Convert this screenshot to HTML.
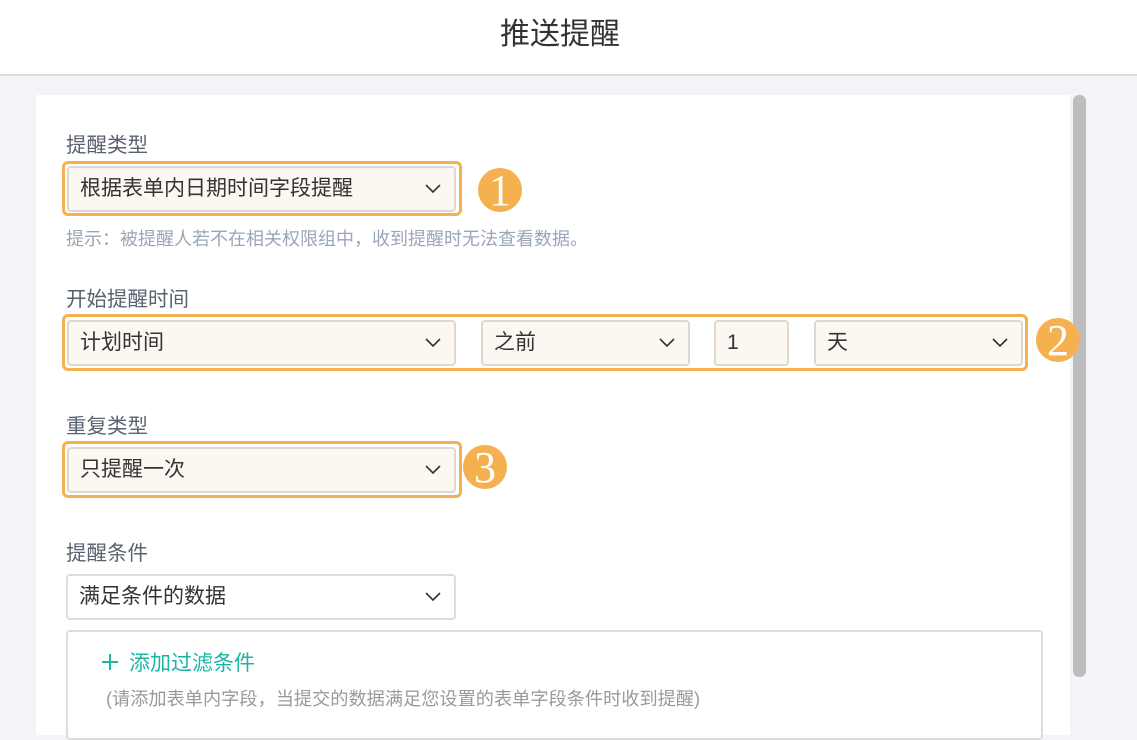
<!DOCTYPE html>
<html><head><meta charset="utf-8"><style>
*{box-sizing:border-box;margin:0;padding:0}
body{width:1137px;height:734px;overflow:hidden;background:#f3f4f8;font-family:"Liberation Sans","Noto Sans CJK SC",sans-serif;position:relative}
.hdr{position:absolute;left:0;top:0;width:1137px;height:76px;background:#fff;border-bottom:2px solid #dcdde0;color:#333}
.hdr span{position:absolute;left:0;width:1120px;text-align:center;font-size:30px;line-height:70px}
.panel{position:absolute;left:36px;top:95px;width:1034px;height:640px;background:#fff}
.sb{position:absolute;left:1073px;top:95px;width:13px;height:582px;background:#bdbdbd;border-radius:6px}
.lbl{position:absolute;left:66px;font-size:20.5px;color:#5a6270}
.hint{position:absolute;left:66px;top:225px;font-size:18px;color:#9aa6b8}
.hl{position:absolute;border:3px solid #f5b04f;border-radius:6px}
.sel{position:absolute;height:46px;border:2px solid #ddd8d2;border-radius:4px;background:#fdf7f2;font-size:21px;color:#333;line-height:42px;padding-left:11px}
.sel.w{background:#fff;border-color:#dcdcdc}
.sel svg{position:absolute;right:12px;top:15px}
.num{position:absolute;width:44px;height:44px;border-radius:50%;background:#f5b04f;color:#fff;font-family:"Liberation Serif",serif;font-size:44px;line-height:46px;text-align:center}
.box{position:absolute;left:66px;top:630px;width:977px;height:110px;border:2px solid #dcdcdc;border-radius:4px;background:#fff}
</style></head><body>
<div class="hdr"><span>推送提醒</span></div>
<div class="panel"></div>
<div class="sb"></div>
<div class="lbl" style="top:128px">提醒类型</div>
<div class="hl" style="left:62px;top:161px;width:400px;height:55px"></div>
<div class="sel" style="left:67px;top:166px;width:389px">根据表单内日期时间字段提醒<svg width="18" height="12" viewBox="0 0 18 12"><path d="M2 2l7 7 7-7" fill="none" stroke="#333" stroke-width="1.6"/></svg></div>
<div class="num" style="left:478px;top:168px">1</div>
<div class="hint">提示：被提醒人若不在相关权限组中，收到提醒时无法查看数据。</div>
<div class="lbl" style="top:282px">开始提醒时间</div>
<div class="hl" style="left:62px;top:314px;width:966px;height:57px"></div>
<div class="sel" style="left:67px;top:320px;width:389px">计划时间<svg width="18" height="12" viewBox="0 0 18 12"><path d="M2 2l7 7 7-7" fill="none" stroke="#333" stroke-width="1.6"/></svg></div>
<div class="sel" style="left:481px;top:320px;width:209px">之前<svg width="18" height="12" viewBox="0 0 18 12"><path d="M2 2l7 7 7-7" fill="none" stroke="#333" stroke-width="1.6"/></svg></div>
<div class="sel" style="left:714px;top:320px;width:75px">1</div>
<div class="sel" style="left:814px;top:320px;width:209px">天<svg width="18" height="12" viewBox="0 0 18 12"><path d="M2 2l7 7 7-7" fill="none" stroke="#333" stroke-width="1.6"/></svg></div>
<div class="num" style="left:1036px;top:318px">2</div>
<div class="lbl" style="top:409px">重复类型</div>
<div class="hl" style="left:62px;top:441px;width:400px;height:57px"></div>
<div class="sel" style="left:67px;top:447px;width:389px">只提醒一次<svg width="18" height="12" viewBox="0 0 18 12"><path d="M2 2l7 7 7-7" fill="none" stroke="#333" stroke-width="1.6"/></svg></div>
<div class="num" style="left:463px;top:445px">3</div>
<div class="lbl" style="top:536px">提醒条件</div>
<div class="sel w" style="left:66px;top:574px;width:390px">满足条件的数据<svg width="18" height="12" viewBox="0 0 18 12"><path d="M2 2l7 7 7-7" fill="none" stroke="#333" stroke-width="1.6"/></svg></div>
<div class="box">
<svg style="position:absolute;left:33px;top:21px" width="18" height="18" viewBox="0 0 18 18"><path d="M9 1v16M1 9h16" stroke="#1cb5a3" stroke-width="2"/></svg>
<div style="position:absolute;left:61px;top:15px;font-size:21px;color:#1cb5a3">添加过滤条件</div>
<div style="position:absolute;left:38px;top:53px;font-size:18.2px;color:#9a9a9a">(请添加表单内字段，当提交的数据满足您设置的表单字段条件时收到提醒)</div>
</div>
</body></html>
